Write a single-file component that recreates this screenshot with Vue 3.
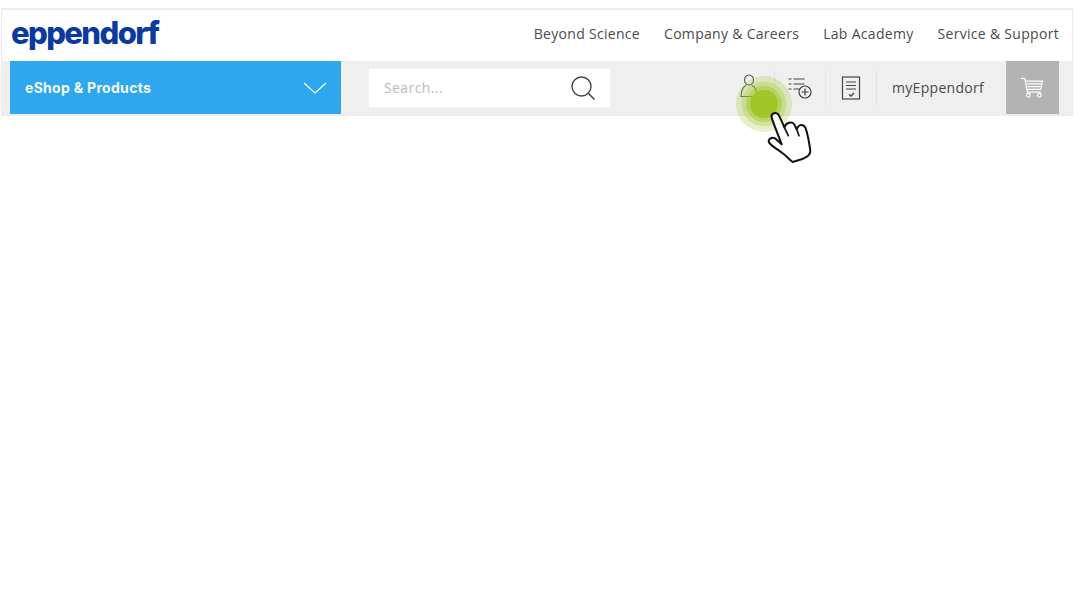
<script setup>
const navLinks = ['Beyond Science', 'Company & Careers', 'Lab Academy', 'Service & Support']
</script>

<template>
  <div class="page">
    <header class="frame">
      <div class="top">
        <span class="logo">eppendorf</span>
        <nav class="nav">
          <a v-for="link in navLinks" :key="link">{{ link }}</a>
        </nav>
      </div>
      <div class="bar">
        <div class="shop">
          <span>eShop &amp; Products</span>
          <svg width="24" height="12" viewBox="0 0 24 12" fill="none" stroke="#fff" stroke-width="1.2">
            <path d="M1 1l11 10L23 1" />
          </svg>
        </div>
        <div class="search">
          <span>Search...</span>
          <svg width="26" height="26" viewBox="0 0 26 26" fill="none" stroke="#444" stroke-width="1.4">
            <circle cx="11.5" cy="11.5" r="9.5" />
            <path d="M18.5 18.5l6 6" stroke-width="1.6" />
          </svg>
        </div>
        <div class="tools">
          <div class="tool">
            <svg class="person" width="18" height="24" viewBox="0 0 18 24" fill="none" stroke="#555" stroke-width="1.1">
              <ellipse cx="9" cy="6" rx="4.500" ry="5" />
              <path d="M6 11.500C3 12.500 1.500 15 1 22.500h16C16.500 15 15 12.500 12 11.500" />
            </svg>
          </div>
          <div class="tool">
            <svg width="24" height="22" viewBox="0 0 24 22" fill="none" stroke="#444" stroke-width="1.2">
              <path d="M0.500 2h3M5.500 2h11M0.500 7h3M5.500 7h11M0.500 12h3M5.500 12h6" />
              <circle cx="17" cy="15" r="6" fill="#efefef" />
              <path d="M17 11.500v7M13.500 15h7" />
            </svg>
          </div>
          <div class="tool">
            <svg width="20" height="24" viewBox="0 0 20 24" fill="none" stroke="#444" stroke-width="1.2">
              <rect x="1.500" y="1" width="17" height="22" />
              <path d="M5 6h10M5 9.500h10M5 13h10" />
              <path d="M8 18.500l2 1.500 3-3" stroke-width="1.400" />
            </svg>
          </div>
          <div class="account">myEppendorf</div>
        </div>
        <div class="cart">
          <svg class="cart-icon" width="24" height="21" viewBox="0 0 26 23" fill="none" stroke="#fff" stroke-width="1.3">
            <path d="M1 1.500h4l3 15h14.500" />
            <path d="M5.500 4.500h19l-2 9H7.500" />
            <path d="M7 7.500h16M8 10.500h14" />
            <circle cx="9" cy="20" r="2" />
            <circle cx="21" cy="20" r="2" />
          </svg>
        </div>
      </div>
    </header>

    <div class="pulse pulse-outer"></div>
    <div class="pulse pulse-mid"></div>
    <div class="pulse pulse-inner"></div>
    <div class="pulse pulse-core"></div>
    <svg class="hand" width="140" height="105" viewBox="0 0 420 315">
      <path
        d="M140 158C137 146 150 140 160 148C165 158 172 172 178 187C183 172 200 168 208 178L215 193C221 176 236 176 242 190C249 210 253 235 256 258C256 270 245 277 232 282L203 291C193 285 185 272 172 264C160 254 142 246 132 232C128 222 140 216 150 220L170 238C160 210 148 184 140 158Z"
        fill="#fff"
        stroke="#111"
        stroke-width="6"
        stroke-linejoin="round"
      />
      <path d="M178 187L190 212M215 193L222 212" fill="none" stroke="#111" stroke-width="5" stroke-linecap="round" />
    </svg>
  </div>
</template>

<style scoped>
.page {
  position: relative;
  width: 1080px;
  height: 609px;
  background: #fff;
  overflow: hidden;
  font-family: "Open Sans", "Liberation Sans", sans-serif;
}
.frame {
  width: 1070px;
  margin: 8px 0 0 1px;
  border: solid #ececec;
  border-width: 2px 1px 2px 1px;
}
.top {
  display: flex;
  align-items: center;
  justify-content: space-between;
  height: 51px;
  padding: 0 13px 0 9px;
  box-sizing: border-box;
}
.logo {
  font-family: Inter, "Liberation Sans", sans-serif;
  font-size: 31px;
  font-weight: 800;
  letter-spacing: -1.6px;
  color: #0b3a9e;
  line-height: 1;
  margin-top: -7px;
}
.nav {
  display: flex;
  gap: 24px;
  margin-top: -5px;
}
.nav a {
  font-size: 14px;
  letter-spacing: 0.3px;
  color: #4a4a4a;
}
.bar {
  display: flex;
  align-items: center;
  height: 53px;
  padding: 0 13px 0 8px;
  background: #efefef;
}
.shop {
  display: flex;
  align-items: center;
  justify-content: space-between;
  box-sizing: border-box;
  width: 331px;
  height: 100%;
  padding: 0 14px 0 15px;
  background: #2fa7ee;
  color: #f2f9fe;
  font-family: Inter, "Liberation Sans", sans-serif;
  font-size: 14px;
  font-weight: 700;
  letter-spacing: 0.3px;
}
.search {
  display: flex;
  align-items: center;
  justify-content: space-between;
  box-sizing: border-box;
  width: 241px;
  height: 38px;
  margin-left: 28px;
  padding: 0 14px 0 15px;
  background: #fff;
  color: #bbb;
  font-size: 14px;
  letter-spacing: 0.4px;
}
.tools {
  display: flex;
  align-items: center;
  height: 34px;
  margin-left: 114px;
}
.tool {
  display: flex;
  align-items: center;
  justify-content: center;
  width: 51px;
  height: 100%;
  border-right: 1px solid #e4e4e4;
  box-sizing: border-box;
}
.person {
  margin-top: -3px;
}
.account {
  width: 129px;
  padding-left: 15px;
  box-sizing: border-box;
  font-size: 14px;
  letter-spacing: 0.3px;
  color: #4a4a4a;
}
.cart {
  display: flex;
  align-items: center;
  justify-content: center;
  width: 53px;
  height: 100%;
  background: #b3b3b3;
}
.cart-icon {
  margin-left: -2px;
}
.pulse {
  position: absolute;
  border-radius: 50%;
  transform: translate(-50%, -50%);
  left: 764px;
  top: 104px;
}
.pulse-outer {
  width: 56px;
  height: 56px;
  background: rgba(160, 198, 39, 0.25);
}
.pulse-mid {
  width: 45px;
  height: 45px;
  background: rgba(160, 198, 39, 0.3);
}
.pulse-inner {
  width: 36px;
  height: 36px;
  background: rgba(160, 198, 39, 0.45);
}
.pulse-core {
  width: 28px;
  height: 28px;
  background: #a0c627;
}
.hand {
  position: absolute;
  left: 725px;
  top: 65px;
}
</style>
